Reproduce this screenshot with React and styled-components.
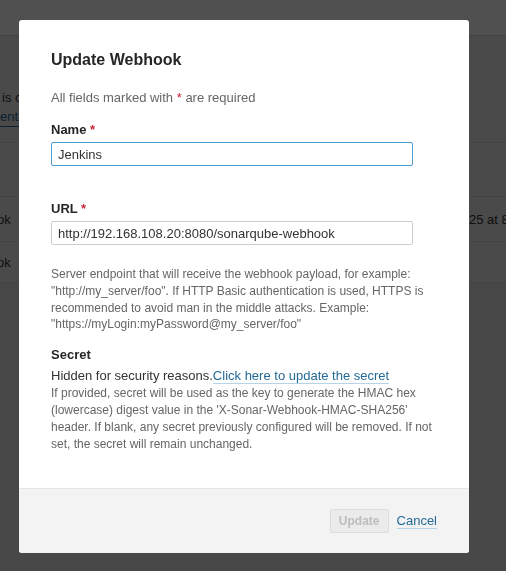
import React from 'react'
import styled, { createGlobalStyle } from 'styled-components'

const GlobalStyle = createGlobalStyle`
  html, body {
    margin: 0;
    padding: 0;
  }
  body {
    font-family: "Liberation Sans", Arial, sans-serif;
    background: #e2e2e2;
    color: #333;
    overflow: hidden;
  }
`

function App() {
    return (
        <>
            <GlobalStyle />
            <Page>
                <TopBar />
                <Intro>
                    <p>is configured</p>
                    <PageLink>entation</PageLink>
                </Intro>
                <Table>
                    <Row $height={53} />
                    <Row $height={44}>
                        <span>ok</span>
                        <Cell>25 at 8:14 AM</Cell>
                    </Row>
                    <Row $height={40}>
                        <span>ok</span>
                    </Row>
                </Table>
            </Page>
            <Overlay />
            <Modal>
                <Head>
                    <h2>Update Webhook</h2>
                </Head>
                <Body>
                    <Hint>
                        All fields marked with <Req>*</Req> are required
                    </Hint>
                    <Field $top={14}>
                        <Label>
                            Name <Req>*</Req>
                        </Label>
                        <Input $focused defaultValue="Jenkins" />
                    </Field>
                    <Field $top={34}>
                        <Label>
                            URL <Req>*</Req>
                        </Label>
                        <Input defaultValue="http://192.168.108.20:8080/sonarqube-webhook" />
                        <Description $top={21}>
                            Server endpoint that will receive the webhook payload, for example:
                            "http://my_server/foo". If HTTP Basic authentication is used, HTTPS is
                            recommended to avoid man in the middle attacks. Example:
                            "https://myLogin:myPassword@my_server/foo"
                        </Description>
                    </Field>
                    <Field $top={13}>
                        <Label>Secret</Label>
                        <Hidden>
                            Hidden for security reasons.<Link>Click here to update the secret</Link>
                        </Hidden>
                        <Description>
                            If provided, secret will be used as the key to generate the HMAC hex
                            (lowercase) digest value in the 'X-Sonar-Webhook-HMAC-SHA256'
                            header. If blank, any secret previously configured will be removed. If not
                            set, the secret will remain unchanged.
                        </Description>
                    </Field>
                </Body>
                <Footer>
                    <Button disabled>Update</Button>
                    <Link as="a" href="#" $big>Cancel</Link>
                </Footer>
            </Modal>
        </>
    )
}

export default App

const Page = styled.div`
width: 100vw;
height: 100vh;
display: flex;
flex-direction: column;
`;

const TopBar = styled.div`
height: 35px;
background: #fdfdfd;
border-bottom: 1px solid #d8d8d8;
`;

const Intro = styled.div`
background: #ececec;
height: 107px;
padding: 52px 0 0 2px;
box-sizing: border-box;
font-size: 13px;
border-bottom: 1px solid #d4d4d4;
p {
    margin: 0;
    line-height: 20px;
}
`;

const PageLink = styled.span`
display: inline-block;
margin-left: -2px;
color: #236a97;
line-height: 18px;
border-bottom: 1px solid #236a97;
`;

const Table = styled.div`
background: #ececec;
display: flex;
flex-direction: column;
`;

const Row = styled.div`
height: ${p => p.$height}px;
border-bottom: 1px solid #d4d4d4;
display: grid;
grid-template-columns: 1fr 37px;
align-items: center;
font-size: 13px;
white-space: nowrap;
span {
    margin-left: -3px;
}
`;

const Cell = styled.div`
overflow: visible;
`;

const Overlay = styled.div`
position: fixed;
inset: 0;
background: rgba(0, 0, 0, 0.685);
`;

const Modal = styled.div`
position: fixed;
top: 20px;
left: 19px;
width: 450px;
background: #fff;
border-radius: 3px;
overflow: hidden;
`;

const Head = styled.div`
padding: 30px 32px 0;
h2 {
    margin: 0;
    font-size: 16px;
    line-height: 20px;
    font-weight: bold;
    color: #262626;
}
`;

const Body = styled.div`
padding: 19px 32px 36px;
`;

const Hint = styled.div`
font-size: 13px;
line-height: 18px;
color: #666;
`;

const Req = styled.em`
font-style: normal;
color: #c6273a;
`;

const Field = styled.div`
margin-top: ${p => p.$top}px;
`;

const Label = styled.label`
display: block;
font-size: 13px;
font-weight: bold;
line-height: 18px;
color: #262626;
margin-bottom: 3px;
`;

const Input = styled.input`
display: block;
box-sizing: border-box;
width: 362px;
height: 24px;
padding: 0 6px;
margin: 0;
font-family: "Liberation Sans", Arial, sans-serif;
font-size: 13px;
color: #333;
background: #fff;
border: 1px solid ${p => (p.$focused ? '#4b9fd5' : '#cdcdcd')};
border-radius: 2px;
outline: none;
`;

const Description = styled.div`
margin-top: ${p => p.$top || 0}px;
font-size: 12px;
line-height: 16.8px;
color: #666;
`;

const Hidden = styled.div`
margin-top: 3px;
font-size: 13px;
line-height: 18px;
color: #333;
`;

const Link = styled.span`
color: #236a97;
font-size: ${p => (p.$big ? '13px' : 'inherit')};
text-decoration: none;
border-bottom: 1px solid #b7d3e6;
`;

const Footer = styled.div`
height: 65px;
box-sizing: border-box;
background: #f3f3f3;
border-top: 1px solid #e6e6e6;
display: flex;
align-items: center;
justify-content: flex-end;
gap: 8px;
padding: 0 32px 0 0;
`;

const Button = styled.button`
height: 24px;
padding: 0 8px;
box-sizing: border-box;
font-family: "Liberation Sans", Arial, sans-serif;
font-size: 12px;
font-weight: bold;
color: #bdbdbd;
background: #ebebeb;
border: 1px solid #dcdcdc;
border-radius: 2px;
`;
